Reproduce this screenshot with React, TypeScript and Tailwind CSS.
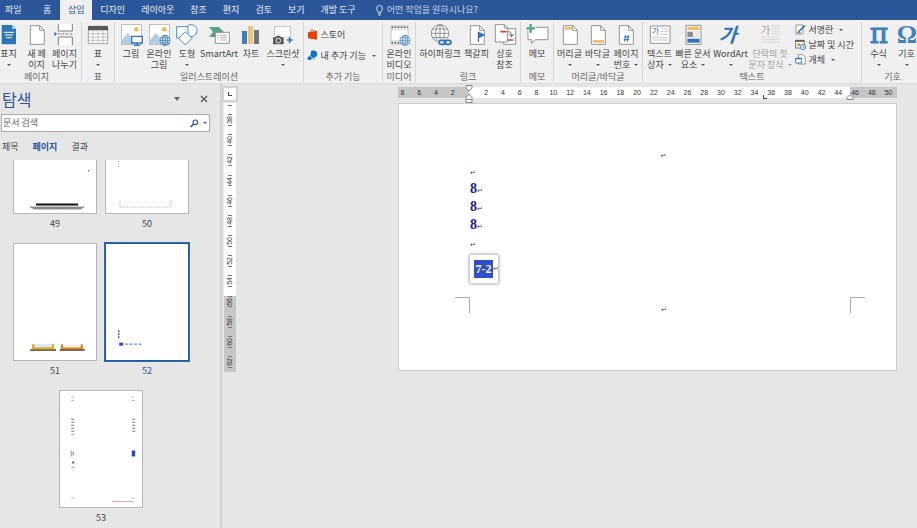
import type { ReactNode } from "react";
import { clsx } from "clsx";

const BLUE = "#2e75b6";
const GRAY = "#7f7f7f";

const tabs = ["디자인", "레이아웃", "참조", "편지", "검토", "보기", "개발 도구"];
const verticalMarks = [38, 40, 42, 44, 46, 48, 50, 52, 54, 56, 58, 60, 62];
const horizontalMarks = [
  8, 6, 4, 2, 0, 2, 4, 6, 8, 10, 12, 14, 16, 18, 20, 22, 24, 26, 28, 30, 32, 34,
  36, 38, 40, 42, 44, 46, 48, 50,
];

function Caret({ className }: { className?: string }) {
  return (
    <svg viewBox="0 0 4 2" className={clsx("inline-block h-[2px] w-1 shrink-0", className)}>
      <path d="M0 0h4L2 2z" fill="#555" />
    </svg>
  );
}

function Icon({ children }: { children: ReactNode }) {
  return (
    <svg viewBox="0 0 72 66" className="h-[22px] w-6 shrink-0 overflow-visible" fill="none" strokeWidth="3">
      {children}
    </svg>
  );
}

function Sheet({ x = 16, w = 42 }: { x?: number; w?: number }) {
  return (
    <>
      <path d={`M${x} 5h${w - 14}l14 14v42h-${w}z`} fill="#fff" stroke={GRAY} strokeWidth="2.5" />
      <path d={`M${x + w - 14} 5v14h14`} stroke={GRAY} strokeWidth="2.5" />
    </>
  );
}

function Globe({ cx, cy, r, color }: { cx: number; cy: number; r: number; color: string }) {
  return (
    <g stroke={color} strokeWidth="2.5">
      <circle cx={cx} cy={cy} r={r} fill="#fff" />
      <ellipse cx={cx} cy={cy} rx={r / 2} ry={r} />
      <path
        d={`M${cx - r} ${cy}h${2 * r}M${cx} ${cy - r}v${2 * r}M${cx - r * 0.85} ${cy - r / 2}h${1.7 * r}M${cx - r * 0.85} ${cy + r / 2}h${1.7 * r}`}
      />
    </g>
  );
}

function Photo() {
  return (
    <>
      <rect x="7" y="2" width="60" height="60" fill="#fff" stroke="#a6a6a6" strokeWidth="2" />
      <circle cx="52" cy="16" r="7" fill="#f0b955" />
      <path d="M9 60V48l18-22 14 20 4 14z" fill="#b4cde6" />
    </>
  );
}

type BigButtonProps = {
  icon: ReactNode;
  lines: string[];
  className: string;
  caret?: boolean;
  disabled?: boolean;
};

function BigButton({ icon, lines, className, caret, disabled }: BigButtonProps) {
  return (
    <button
      type="button"
      disabled={disabled}
      className={clsx(
        "flex shrink-0 flex-col items-center whitespace-nowrap pt-[2px] leading-[11px]",
        disabled ? "text-[#a0a0a0]" : "text-[#444]",
        className
      )}
    >
      <Icon>{icon}</Icon>
      <span className="mt-[2px]">{lines[0]}</span>
      <span className="flex h-[11px] items-center gap-1">
        {lines[1]}
        {caret && <Caret className={disabled ? "opacity-50" : ""} />}
      </span>
    </button>
  );
}

function SmallButton({ icon, label, caret }: { icon: ReactNode; label: string; caret?: boolean }) {
  return (
    <button type="button" className="flex h-[15px] items-center gap-[3px] whitespace-nowrap text-[#444]">
      <svg viewBox="0 0 33 33" className="h-[11px] w-[11px] shrink-0" fill="none" strokeWidth="2.5">
        {icon}
      </svg>
      {label}
      {caret && <Caret className="ml-[3px]" />}
    </button>
  );
}

function Group({ label, className, children }: { label: string; className?: string; children: ReactNode }) {
  return (
    <section
      className={clsx(
        "flex shrink-0 flex-col items-center justify-between border-r border-[#d5d5d5]",
        className
      )}
    >
      <div className="flex h-12">{children}</div>
      <h2 className="whitespace-nowrap leading-[11px] text-[#666]">{label}</h2>
    </section>
  );
}

function Ribbon() {
  return (
    <div className="flex h-16 overflow-hidden border-b border-[#dcdcdc] bg-[#f0f0f0] pb-px pt-[2px]">
      <Group label="페이지" className="w-[82px] pr-2">
        <BigButton
          className="w-5"
          lines={["표지"]}
          caret
          icon={
            <>
              <path d="M14 3h31l12 12v46H14z" fill={BLUE} />
              <path d="M45 3v12h12" fill="#9dc3e6" />
              <path d="M20 25h32M24 33h24M28 41h16" stroke="#fff" />
            </>
          }
        />
        <BigButton className="w-9" lines={["새 페", "이지"]} icon={<Sheet />} />
        <BigButton
          className="w-5"
          lines={["페이지", "나누기"]}
          icon={
            <>
              <path d="M16 0v21h42V0" fill="#fff" stroke={GRAY} />
              <path d="M16 64V39h42v25" fill="#fff" stroke={GRAY} />
              <path d="M14 30h46" stroke={GRAY} strokeDasharray="8 4" />
              <path d="M4 23l8 7-8 7z" fill={BLUE} />
            </>
          }
        />
      </Group>
      <Group label="표" className="w-[33px]">
        <BigButton
          className="w-7"
          lines={["표"]}
          caret
          icon={
            <>
              <path d="M7 7h58v52H7z" fill="#fff" stroke={GRAY} strokeWidth="2" />
              <path d="M6 6h60v13H6z" fill="#595959" />
              <path d="M7 29h58M7 39h58M7 49h58M21 19v40M36 19v40M51 19v40" stroke="#a6a6a6" strokeWidth="2" />
            </>
          }
        />
      </Group>
      <Group label="일러스트레이션" className="w-[189px]">
        <BigButton
          className="w-7"
          lines={["그림"]}
          icon={
            <>
              <Photo />
              <path d="M38 37h32v20H38z" fill="#fff" stroke={BLUE} strokeWidth="4" />
              <path d="M54 57v7M45 64h18" stroke={BLUE} strokeWidth="4" />
            </>
          }
        />
        <BigButton
          className="w-7"
          lines={["온라인", "그림"]}
          icon={
            <>
              <Photo />
              <Globe cx={54} cy={49} r={15} color={BLUE} />
            </>
          }
        />
        <BigButton
          className="w-7"
          lines={["도형"]}
          caret
          icon={
            <g fill="#fff" stroke="#4a8bc9">
              <circle cx="48" cy="20" r="18" />
              <path d="M5 8h34v34H5z" />
              <path d="M31 23l20 20-20 20-20-20z" />
            </g>
          }
        />
        <BigButton
          className="w-9"
          lines={["SmartArt"]}
          icon={
            <>
              <path d="M6 9h30l15 15-15 15H6l12-15z" fill="#5aa58a" />
              <path d="M25 25h42v33H25z" fill="#fff" stroke={GRAY} strokeWidth="2.5" />
              <path d="M31 34h4M39 34h21M31 41h4M39 41h21M31 48h4M39 48h21" stroke="#a0a0a0" strokeWidth="2.5" />
            </>
          }
        />
        <BigButton
          className="w-7"
          lines={["차트"]}
          icon={
            <>
              <path d="M9 21h15v39H9z" fill="#3f7fbf" />
              <path d="M27 6h15v54H27z" fill="#ecc57c" />
              <path d="M45 18h15v42H45z" fill="#737373" />
            </>
          }
        />
        <BigButton
          className="w-9"
          lines={["스크린샷"]}
          caret
          icon={
            <>
              <path d="M11 36V8h48v30" fill="#fff" stroke={GRAY} strokeWidth="2.5" strokeDasharray="3 3" />
              <path d="M6 40h8l3-5h10l3 5h8v21H6z" fill="#595959" />
              <circle cx="22" cy="50" r="7" stroke="#fff" strokeWidth="2.5" />
              <path d="M56 39v18M47 48h18" stroke={BLUE} strokeWidth="5" />
            </>
          }
        />
      </Group>
      <Group label="추가 기능" className="w-[79px]">
        <div className="flex w-[73px] flex-col gap-[6px] pt-[5px]">
          <SmallButton
            label="스토어"
            icon={
              <>
                <path d="M3 10l27-5v27L3 28z" fill="#e8400c" />
                <path d="M10 10c0-9 10-11 11-2" stroke="#e8400c" />
              </>
            }
          />
          <SmallButton
            label="내 추가 기능"
            caret
            icon={
              <>
                <path d="M12 3l9-2 8 4 2 9-5 8-10 1-6-6z" fill="#1273c6" />
                <circle cx="8" cy="25" r="6" fill="#1273c6" />
                <path d="M17 21l5 8" stroke="#1273c6" />
              </>
            }
          />
        </div>
      </Group>
      <Group label="미디어" className="w-[33px]">
        <BigButton
          className="w-7"
          lines={["온라인", "비디오"]}
          icon={
            <>
              <path d="M12 6h51v54H12z" fill="#fff" stroke="#a6a6a6" strokeWidth="2" />
              <path d="M14 10h48M14 56h48" stroke="#555" strokeWidth="5" strokeDasharray="5 4" />
              <path d="M13 17h49M13 50h49" stroke="#c4c4c4" strokeWidth="2" />
              <Globe cx={54} cy={49} r={15} color="#4a8bc9" />
            </>
          }
        />
      </Group>
      <Group label="링크" className="w-[105px]">
        <BigButton
          className="w-[45px]"
          lines={["하이퍼링크"]}
          icon={
            <>
              <Globe cx={36} cy={28} r={26} color={GRAY} />
              <g stroke="#f0f0f0" strokeWidth="10">
                <rect x="33" y="49" width="20" height="12" rx="6" />
                <rect x="49" y="49" width="20" height="12" rx="6" />
              </g>
              <g stroke={BLUE} strokeWidth="5">
                <rect x="33" y="49" width="20" height="12" rx="6" />
                <rect x="49" y="49" width="20" height="12" rx="6" />
              </g>
            </>
          }
        />
        <BigButton
          className="w-7"
          lines={["책갈피"]}
          icon={
            <>
              <Sheet />
              <path d="M40 23v31" stroke="#444" />
              <path d="M42 24l19 9-19 10z" fill={BLUE} />
            </>
          }
        />
        <BigButton
          className="w-7"
          lines={["상호", "참조"]}
          icon={
            <>
              <path d="M32 14h36v47H32z" fill="#fff" stroke={GRAY} strokeWidth="2.5" />
              <path d="M7 2h27l10 10v42H7z" fill="#fff" stroke={GRAY} strokeWidth="2.5" />
              <path d="M34 2v10h10" stroke={GRAY} strokeWidth="2.5" />
              <path d="M22 23h19M44 48h17" stroke="#d24726" strokeWidth="5" />
              <path d="M46 23c7 0 9 4 9 14M48 31l7 7 7-7" stroke="#555" />
            </>
          }
        />
      </Group>
      <Group label="메모" className="w-[33px]">
        <BigButton
          className="w-7"
          lines={["메모"]}
          icon={
            <>
              <path d="M9 10h60v37H32L20 58V47H9z" fill="#fff" stroke={GRAY} strokeWidth="2.5" />
              <path d="M17 0v30M2 13h30" stroke="#f0f0f0" strokeWidth="13" />
              <path d="M17 0v26M4 13h26" stroke="#5aa58a" strokeWidth="7" />
            </>
          }
        />
      </Group>
      <Group label="머리글/바닥글" className="w-[89px]">
        <BigButton
          className="w-7"
          lines={["머리글"]}
          caret
          icon={
            <>
              <Sheet />
              <path d="M20 9h22v8H20z" fill="#ecc06c" />
            </>
          }
        />
        <BigButton
          className="w-7"
          lines={["바닥글"]}
          caret
          icon={
            <>
              <Sheet />
              <path d="M20 48h34v8H20z" fill="#ecc06c" />
            </>
          }
        />
        <BigButton
          className="w-[29px]"
          lines={["페이지", "번호"]}
          caret
          icon={
            <>
              <Sheet />
              <path d="M35 33l-3 20M43 33l-3 20M30 39h17M29 47h17" stroke={BLUE} />
            </>
          }
        />
      </Group>
      <Group label="텍스트" className="w-[219px]">
        <BigButton
          className="w-7"
          lines={["텍스트", "상자"]}
          caret
          icon={
            <>
              <path d="M7 6h59v52H7z" fill="#fff" stroke={GRAY} strokeWidth="2.5" />
              <text x="12" y="31" fontSize="23" fill={BLUE}>
                가
              </text>
              <path d="M38 15h22M38 23h22M38 31h22M13 40h47M13 48h47" stroke="#b0b0b0" strokeWidth="2" />
            </>
          }
        />
        <BigButton
          className="w-[39px]"
          lines={["빠른 문서", "요소"]}
          caret
          icon={
            <>
              <path d="M15 4h45v57H15z" fill="#fff" stroke={GRAY} strokeWidth="2.5" />
              <path d="M19 8h37v10H19z" fill="#ecc06c" />
              <path d="M19 23h17v16H19z" fill="#8c8c8c" />
              <path d="M40 24h16M40 31h16M40 38h16" stroke="#b0b0b0" strokeWidth="2" />
              <path d="M19 44h37v12H19z" fill={BLUE} />
            </>
          }
        />
        <BigButton
          className="w-9"
          lines={["WordArt"]}
          caret
          icon={
            <text x="16" y="54" fontSize="58" fontWeight="700" fill={BLUE} transform="skewX(-18)">
              가
            </text>
          }
        />
        <BigButton
          className="w-[43px]"
          lines={["단락의 첫", "문자 장식"]}
          caret
          disabled
          icon={
            <>
              <text x="8" y="30" fontSize="31" fill="#a0a0a0">
                가
              </text>
              <path d="M40 5h26M40 13h26M40 21h26M40 29h26M9 39h57M9 47h57M9 55h57" stroke="#cfcfcf" strokeWidth="2" />
            </>
          }
        />
        <div className="flex w-[67px] flex-col pl-[3px]">
          <SmallButton
            label="서명란"
            caret
            icon={
              <>
                <path d="M3 3h21v27H3z" fill="#fff" stroke={GRAY} />
                <path d="M10 24L30 5" stroke={BLUE} strokeWidth="5" />
                <path d="M6 26h12" stroke={BLUE} />
              </>
            }
          />
          <SmallButton
            label="날짜 및 시간"
            icon={
              <>
                <path d="M1 4h27v23H1z" fill="#fff" stroke="#595959" />
                <path d="M1 6h27" stroke="#595959" strokeWidth="5" />
                <path d="M7 13h9v8H7z" fill="#ed8733" />
                <circle cx="24" cy="24" r="8" fill="#fff" stroke={BLUE} />
                <path d="M24 19v6h4" stroke={BLUE} />
              </>
            }
          />
          <SmallButton
            label="개체"
            caret
            icon={
              <>
                <path d="M10 2h14l7 7v21H10z" fill="#fff" stroke={GRAY} />
                <path d="M2 13h18v14H2z" fill="#fff" stroke={BLUE} />
                <path d="M2 14h18" stroke={BLUE} strokeWidth="4" />
              </>
            }
          />
        </div>
      </Group>
      <Group label="기호" className="w-[62px]">
        <BigButton
          className="w-7"
          lines={["수식"]}
          caret
          icon={
            <text
              x="36"
              y="57"
              textAnchor="middle"
              fontSize="84"
              className="font-['DejaVu_Serif',serif]"
              fill="#3f7fbf"
              stroke="#3f7fbf"
            >
              π
            </text>
          }
        />
        <BigButton
          className="w-7"
          lines={["기호"]}
          caret
          icon={
            <text
              x="36"
              y="57"
              textAnchor="middle"
              fontSize="76"
              fontWeight="700"
              className="font-['Liberation_Serif',serif]"
              fill="#3f7fbf"
            >
              Ω
            </text>
          }
        />
      </Group>
    </div>
  );
}

function TabBar() {
  return (
    <nav className="flex h-5 items-stretch whitespace-nowrap bg-[#2b579a] text-[#e8eef7]">
      <button type="button" className="w-[34px] pl-[5px] text-left">
        파일
      </button>
      <button type="button" className="px-[9px]">
        홈
      </button>
      <button type="button" className="w-8 bg-[#f0f0f0] text-[#2b579a]">
        삽입
      </button>
      {tabs.map((tab) => (
        <button key={tab} type="button" className="px-2">
          {tab}
        </button>
      ))}
      <button type="button" className="flex items-center gap-1 pl-3 text-[#c3d2ea]">
        <svg viewBox="0 0 21 33" className="h-[11px] w-[7px]" fill="none" stroke="#fff" strokeWidth="2.5">
          <path d="M6 22c0-5-4-6-4-12a8.500 8.500 0 0 1 17 0c0 6-4 7-4 12zM6 27h9M8 31h5" />
        </svg>
        어떤 작업을 원하시나요?
      </button>
    </nav>
  );
}

type ThumbnailProps = {
  page: number;
  selected?: boolean;
  cropped?: boolean;
  children: ReactNode;
};

function Thumbnail({ page, selected, cropped, children }: ThumbnailProps) {
  return (
    <button
      type="button"
      className={clsx("flex w-[84px] flex-col items-center", selected ? "text-[#2b579a]" : "text-[#444]")}
    >
      <svg
        viewBox={cropped ? "0 64 82 53" : "0 0 82 117"}
        className={clsx(
          "w-full bg-white",
          cropped ? "h-[54px] border-x border-b" : "h-[118px] border",
          selected ? "border-[#2b579a] outline outline-[#2b6cb0]" : "border-[#b4b8bb]"
        )}
        fill="none"
      >
        {children}
      </svg>
      <span className="mt-1 h-[25px] leading-[11px]">{page}</span>
    </button>
  );
}

function NavigationPane() {
  return (
    <aside className="flex w-[222px] shrink-0 flex-col border-r-2 border-[#d2d2d2]">
      <header className="flex h-[30px] shrink-0 items-center pl-[2px] pr-3">
        <h1 className="flex-1 text-[16px] leading-5 text-[#2b579a]">탐색</h1>
        <button type="button" aria-label="작업창 옵션" className="mr-5">
          <svg viewBox="0 0 6 4" className="h-1 w-[6px]">
            <path d="M0 0h6L3 4z" fill="#666" />
          </svg>
        </button>
        <button type="button" aria-label="닫기">
          <svg viewBox="0 0 8 8" className="h-2 w-2" stroke="#555" strokeWidth="1.2">
            <path d="M1 1l6 6M7 1L1 7" />
          </svg>
        </button>
      </header>
      <div className="ml-px mr-[10px] flex h-[18px] shrink-0 items-center border border-[#ababab] bg-white pr-[2px]">
        <input
          type="text"
          aria-label="문서 검색"
          placeholder="문서 검색"
          className="min-w-0 flex-1 pl-px outline-none placeholder:text-[#666]"
        />
        <button type="button" aria-label="검색" className="mr-1">
          <svg viewBox="0 0 27 27" className="h-[9px] w-[9px]" fill="none" stroke="#2b579a" strokeWidth="3.500">
            <circle cx="16" cy="10" r="7" />
            <path d="M11 15l-9 9" strokeWidth="5" />
          </svg>
        </button>
        <Caret />
      </div>
      <div className="flex h-7 shrink-0 items-center gap-[14px] pl-[2px] pt-px text-[#444]">
        <button type="button">제목</button>
        <button type="button" className="font-bold text-[#2b579a]">
          페이지
        </button>
        <button type="button">결과</button>
      </div>
      <div className="mr-[18px] flex shrink-0 flex-wrap justify-center gap-x-2">
        <Thumbnail page={49} cropped>
          <path d="M74 74h1.500v1.500H74z" fill="#888" />
          <path d="M16 111h54l-3 2H20z" fill="#777" stroke="#999" strokeWidth="1" />
          <path d="M22 108.500h42" stroke="#111" strokeWidth="2" />
        </Thumbnail>
        <Thumbnail page={50} cropped>
          <path d="M14 104v7h51v-7" stroke="#a9b6ea" strokeDasharray="1 1" />
          <path d="M12 65h1v1h-1z" fill="#888" />
        </Thumbnail>
        <Thumbnail page={51}>
          <path d="M16 107h26M46 107h25" stroke="#666" strokeWidth="2" />
          <path d="M19 101h20v4H19z" fill="#dfe6f3" />
          <path d="M19 101v4.500h20V101" stroke="#d6a518" strokeWidth="2" />
          <path d="M48 101h20v4H48z" fill="#f2f2f2" />
          <path d="M48 101v4.500h20V101" stroke="#dd7d10" strokeWidth="2" />
        </Thumbnail>
        <Thumbnail page={52} selected>
          <path d="M12.500 87v8" stroke="#2b2b8c" strokeWidth="1.200" strokeDasharray="2 1" />
          <path d="M13 99.500h4v3h-4z" fill="#2446c8" />
          <path d="M19 101h17" stroke="#4a66d8" strokeDasharray="3 1.500" />
        </Thumbnail>
        <Thumbnail page={53}>
          <path d="M11 6h3M11 9.500h3M72 9.500h3M11 108h3M72 108h3M52 111.500h9" stroke="#e79a9a" />
          <path d="M72 6h2M61 111.500h13" stroke="#b5b5b5" />
          <path d="M12.500 28v17M74 28v14" stroke="#777" strokeWidth="3" strokeDasharray="1 2" />
          <path d="M11 60v6M11 77h3M13 80h1" stroke="#999" />
          <path d="M13 61v4" stroke="#5a72d8" />
          <path d="M12 71h2v2h-2zM72 60h3.500v6H72z" fill="#2446c8" />
        </Thumbnail>
      </div>
    </aside>
  );
}

function VerticalRuler() {
  return (
    <div className="flex w-4 shrink-0 flex-col items-center pt-[2px]">
      <button
        type="button"
        aria-label="탭 종류"
        className="flex h-4 w-4 items-center justify-center border-2 border-[#d2d2d2] bg-white"
      >
        <span className="h-1 w-1 border-b border-l border-[#444]" />
      </button>
      <div className="mt-[1px] flex h-[269px] w-3 flex-col items-center bg-[linear-gradient(#fff_193px,#c6c6c6_193px)] font-['Liberation_Sans',sans-serif] text-[7px] text-[#333]">
        <span className="mb-1 mt-[2px] h-px w-1 shrink-0 bg-[#777]" />
        {verticalMarks.map((mark) => (
          <span key={mark} className="flex flex-1 flex-col items-center justify-center gap-px">
            <span className="h-px w-1 bg-[#777]" />
            <span className="rotate-180 leading-[8px] [writing-mode:vertical-rl]">{mark}</span>
            <span className="h-px w-1 bg-[#777]" />
          </span>
        ))}
      </div>
    </div>
  );
}

function HorizontalRuler() {
  return (
    <div className="relative flex h-[11px] items-center bg-[linear-gradient(90deg,#c6c6c6_71px,#fff_71px,#fff_452px,#c6c6c6_452px)] font-['Liberation_Sans',sans-serif] text-[7px] leading-[11px] text-[#333]">
      <div className="-ml-1 flex flex-1">
        {horizontalMarks.map((mark, i) => (
          <span key={i} className="min-w-0 flex-1 text-center">
            {mark === 0 ? "" : mark}
          </span>
        ))}
      </div>
      {/* indent handles and the tab stop sit over the scale */}
      <svg viewBox="0 0 8 18" className="absolute -top-[2px] left-[67px] h-[18px] w-2" fill="#fff" stroke="#888">
        <path d="M1 .5h6v2.500L4 6 1 3zM1 17.500v-5L4 9l3 3.500v5zM1 14.500h6" />
      </svg>
      <span className="absolute left-[365px] top-2 h-1 w-1 border-b border-l border-[#444]" />
      <svg viewBox="0 0 8 6" className="absolute left-[448px] top-[7px] h-[6px] w-2" fill="#fff" stroke="#888">
        <path d="M1 5.500V3.500L4 .5l3 3v2z" />
      </svg>
    </div>
  );
}

function Mark() {
  return <span className="font-['DejaVu_Sans',sans-serif] text-[7px] font-normal text-[#444]">↵</span>;
}

function DocumentPage() {
  return (
    <article className="mt-[5px] h-[268px] border border-[#cfcfcf] bg-white pt-[43px] font-['Liberation_Serif',serif]">
      <div className="ml-[70px] mr-[46px]">
        <p className="h-[17px] pl-2 text-center leading-4">
          <Mark />
        </p>
        <p className="h-4 pl-px leading-4">
          <Mark />
        </p>
        {[1, 2, 3].map((line) => (
          <p key={line} className="h-[18px] pl-px text-[14px] font-bold leading-[18px] text-[#1c1c8c]">
            8<Mark />
          </p>
        ))}
        <p className="h-5 pl-px leading-5">
          <Mark />
        </p>
        <div className="flex h-[30px] w-[30px] items-center rounded-[2px] border border-[#d0d0d0] pl-1 shadow-[0_0_3px_#999]">
          <span className="h-[18px] w-[19px] shrink-0 bg-[#2f4fc9] text-center text-[12px] font-bold leading-[18px] text-white">
            7-2
          </span>
          <Mark />
        </div>
      </div>
      <div className="ml-14 mr-[31px] mt-[13px] flex h-4 items-start justify-between">
        <span className="h-4 w-[15px] border-r border-t border-[#aaa]" />
        <span className="pl-2 pt-1 leading-4">
          <Mark />
        </span>
        <span className="h-4 w-[15px] border-l border-t border-[#aaa]" />
      </div>
    </article>
  );
}

export default function App() {
  return (
    <div className="flex h-screen flex-col overflow-hidden bg-[#e6e6e6] font-['Noto_Sans_CJK_KR',sans-serif] text-[9px]">
      <TabBar />
      <Ribbon />
      <div className="flex min-h-0 flex-1">
        <NavigationPane />
        <VerticalRuler />
        <main className="min-w-0 flex-1 pl-40 pr-5 pt-[3px]">
          <HorizontalRuler />
          <DocumentPage />
        </main>
      </div>
    </div>
  );
}
